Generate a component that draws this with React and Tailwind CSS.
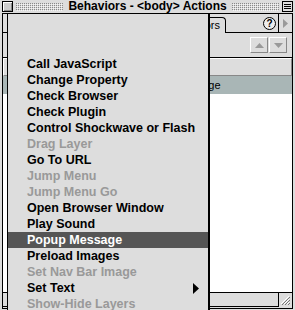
const items = [
  { label: 'Call JavaScript' },
  { label: 'Change Property' },
  { label: 'Check Browser' },
  { label: 'Check Plugin' },
  { label: 'Control Shockwave or Flash' },
  { label: 'Drag Layer', disabled: true },
  { label: 'Go To URL' },
  { label: 'Jump Menu', disabled: true },
  { label: 'Jump Menu Go', disabled: true },
  { label: 'Open Browser Window' },
  { label: 'Play Sound' },
  { label: 'Popup Message', active: true },
  { label: 'Preload Images' },
  { label: 'Set Nav Bar Image', disabled: true },
  { label: 'Set Text', submenu: true },
  { label: 'Show-Hide Layers', disabled: true },
];

const Dots = ({ id }) => (
  <div className="flex-1 h-[8px] min-w-0">
    <svg className="w-full h-full block">
      <defs>
        <pattern id={id} width="2" height="2" patternUnits="userSpaceOnUse">
          <rect x="0" y="0" width="1" height="1" fill="#8a8a8a" />
          <rect x="1" y="1" width="1" height="1" fill="#f4f4f4" />
        </pattern>
      </defs>
      <rect width="100%" height="100%" fill={`url(#${id})`} />
    </svg>
  </div>
);

const TitleBar = () => (
  <div className="h-[13px] flex items-center gap-[3px] px-[2px]">
    <div className="w-[11px] h-[11px] border border-black bg-[#cccccc] shadow-[inset_1px_1px_0_#fff,inset_-1px_-1px_0_#888]" />
    <Dots id="dl" />
    <span className="px-[2px] text-[12px] leading-[13px] font-bold text-black whitespace-nowrap">
      Behaviors - &lt;body&gt; Actions
    </span>
    <Dots id="dr" />
    <div className="w-[11px] h-[11px] border border-black bg-[#dddddd] flex flex-col justify-center gap-[1px] px-[1px]">
      <div className="h-px bg-black" />
      <div className="h-px bg-black" />
      <div className="h-px bg-black" />
    </div>
  </div>
);

const Bevel = 'border-t border-l border-t-white border-l-white border-b border-r border-b-[#888] border-r-[#888]';

const Panel = () => (
  <div className="ml-[2px] w-[291px] h-[296px] border border-black flex flex-col font-['Liberation_Sans',Arial,sans-serif]">
    {/* tabs */}
    <div className="h-[19px] flex items-end">
      <div className="w-[143px] h-full border-b border-black" />
      <div className="w-[80px] h-[16px] border-t border-r border-l border-black rounded-t-[4px] text-[11px] leading-[14px] text-right pr-[5px]">
        Behaviors
      </div>
      <div className="flex-1 h-full border-b border-black flex items-center justify-end pr-[2px]">
        <div className="w-[13px] h-[13px] rounded-full border border-black bg-[#eeeeee] text-[10px] leading-[11px] font-bold text-center">?</div>
      </div>
      <div className="w-[14px] h-full border-b border-l border-black flex items-center justify-center">
        <svg width="5" height="9" viewBox="0 0 5 9"><polygon points="0,0 5,4.5 0,9" fill="#9a9a9a" /></svg>
      </div>
    </div>
    {/* toolbar */}
    <div className="h-[25px] border-b border-black flex items-center justify-end gap-[1px] pr-[5px]">
      <div className={`w-[18px] h-[16px] bg-[#dddddd] ${Bevel} flex items-center justify-center`}>
        <svg width="9" height="5" viewBox="0 0 9 5"><polygon points="4.5,0 9,5 0,5" fill="#999" /></svg>
      </div>
      <div className={`w-[18px] h-[16px] bg-[#dddddd] ${Bevel} flex items-center justify-center`}>
        <svg width="9" height="5" viewBox="0 0 9 5"><polygon points="0,0 9,0 4.5,5" fill="#999" /></svg>
      </div>
    </div>
    {/* column header (hidden under the menu) */}
    <div className="h-[18px] flex bg-[#dddddd]">
      <div className={`w-[134px] ${Bevel}`} />
      <div className={`flex-1 ${Bevel}`} />
    </div>
    {/* selected row */}
    <div className="h-[18px] flex items-center bg-[#a9b6b6] text-[11px] text-black">
      <div className="w-[134px]" />
      <div className="pl-[4px]">Popup Message</div>
    </div>
    <div className="flex-1 bg-white border-b border-black" />
    <div className="h-[14px] flex">
      <div className="flex-1 border-b border-r border-black bg-[#dddddd]" />
      <div className="w-[13px] flex items-center justify-center bg-[#dddddd]">
        <svg width="11" height="11" viewBox="0 0 11 11">
          <path d="M2 10 L10 2 M5 10 L10 5 M8 10 L10 8" stroke="#777" strokeWidth="1" />
          <path d="M1 9 L9 1 M4 9 L9 4 M7 9 L9 7" stroke="#fff" strokeWidth="1" />
        </svg>
      </div>
    </div>
    <div className="h-px" />
  </div>
);

const ActionsMenu = () => (
  <div className="absolute left-[7px] top-[13px] w-[202px] h-[310px] bg-[#dddddd] border border-black shadow-[1px_1px_0_#000] pt-[42px] font-['Liberation_Sans',Arial,sans-serif]">
    {items.map((it) => (
      <div
        key={it.label}
        className={`h-[16px] flex items-center justify-between pl-[19px] pr-[9px] text-[12.5px] font-bold leading-[16px] whitespace-nowrap ${
          it.active ? 'bg-[#555555] text-white' : it.disabled ? 'text-[#999999]' : 'text-black'
        }`}
      >
        <span>{it.label}</span>
        {it.submenu && (
          <svg width="6" height="11" viewBox="0 0 6 11"><polygon points="0,0 6,5.5 0,11" fill="#000" /></svg>
        )}
      </div>
    ))}
  </div>
);

export default function App() {
  return (
    <div className="relative w-[295px] h-[310px] overflow-hidden bg-[#dddddd] font-['Liberation_Sans',Arial,sans-serif]">
      <TitleBar />
      <Panel />
      <ActionsMenu />
    </div>
  );
}
